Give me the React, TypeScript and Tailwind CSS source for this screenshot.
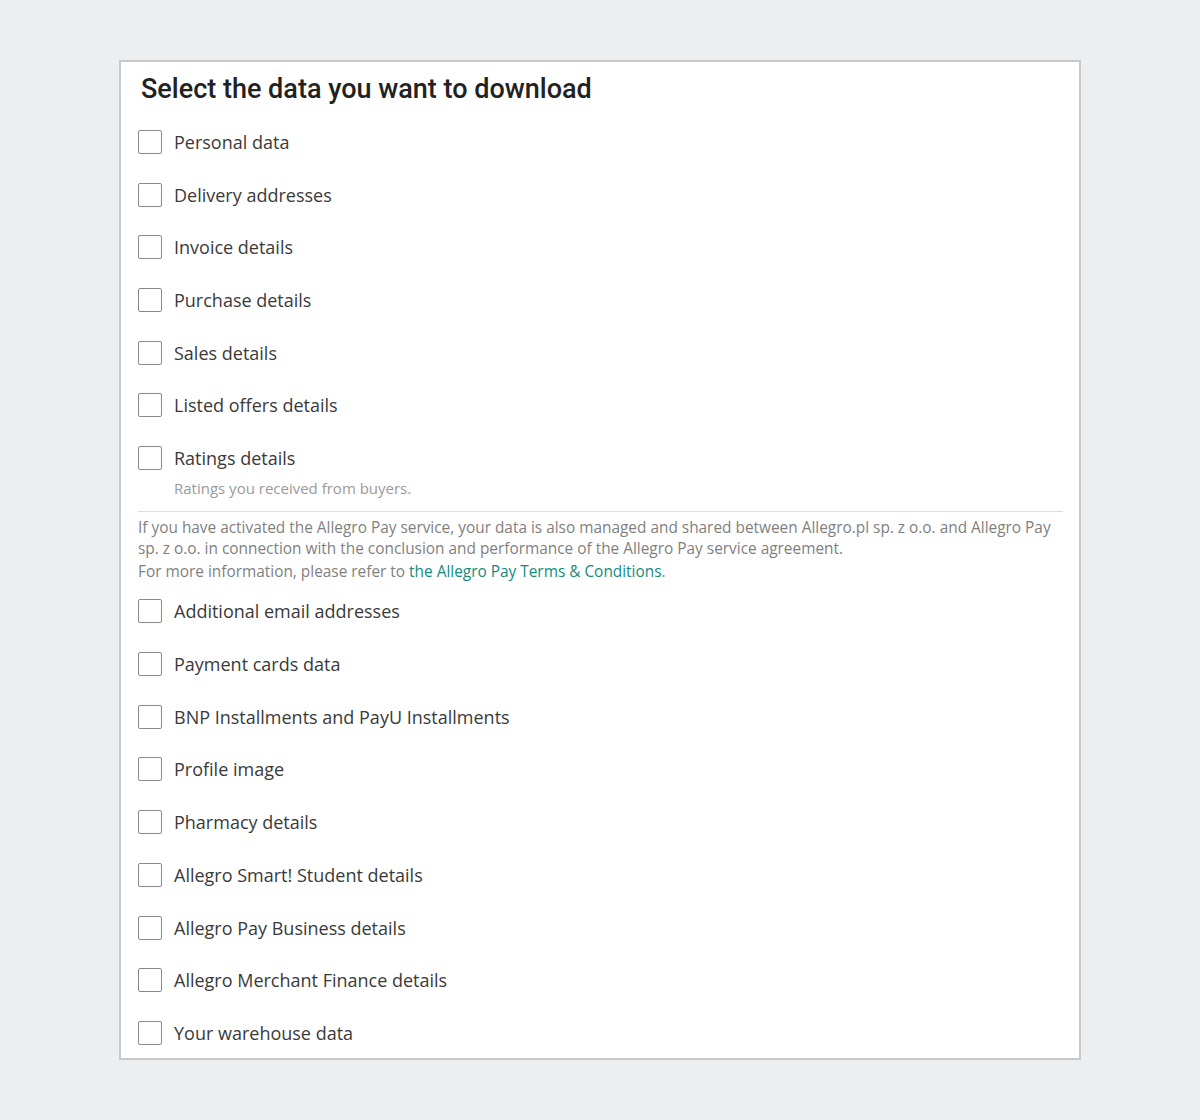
const firstGroup = [
  "Personal data",
  "Delivery addresses",
  "Invoice details",
  "Purchase details",
  "Sales details",
  "Listed offers details",
];

const secondGroup = [
  "Additional email addresses",
  "Payment cards data",
  "BNP Installments and PayU Installments",
  "Profile image",
  "Pharmacy details",
  "Allegro Smart! Student details",
  "Allegro Pay Business details",
  "Allegro Merchant Finance details",
  "Your warehouse data",
];

function Box() {
  return (
    <span className="w-6 h-6 shrink-0 rounded-[2px] border-[1.5px] border-[#8a8a8a] bg-white" />
  );
}

function Item({ label, className = "" }: { label: string; className?: string }) {
  return (
    <label className={`flex items-center h-6 gap-3 cursor-pointer ${className}`}>
      <input type="checkbox" className="sr-only" />
      <Box />
      <span className="text-[18px] leading-6 text-[#3a3a3a]">{label}</span>
    </label>
  );
}

export default function App() {
  return (
    <div
      className="min-h-[1120px] bg-[#eceff1] pt-[60px] px-[119px]"
      style={{ fontFamily: '"Open Sans", "Liberation Sans", sans-serif' }}
    >
      <div className="w-[962px] h-[1000px] bg-white border-2 border-[#c9c9c9] pl-[17px] pr-[16px]">
        <h1
          className="mt-3 ml-[3px] text-[27px] leading-[30px] font-medium text-[#222]"
          style={{ fontFamily: 'Roboto, "Liberation Sans", sans-serif' }}
        >
          Select the data you want to download
        </h1>

        <div className="mt-[26px] flex flex-col gap-[28.7px]">
          {firstGroup.map((l) => (
            <Item key={l} label={l} />
          ))}
          <div>
            <Item label="Ratings details" />
            <p className="mt-[8px] ml-[36px] text-[15px] leading-5 text-[#9a9a9a]">
              Ratings you received from buyers.
            </p>
          </div>
        </div>

        <div className="mt-[13px] border-t border-[#dcdcdc] pt-[5px] text-[15.4px] leading-[21px] text-[#7f7f7f]">
          <p>
            If you have activated the Allegro Pay service, your data is also managed and shared between
            Allegro.pl sp. z o.o. and Allegro Pay
            <br />
            sp. z o.o. in connection with the conclusion and performance of the Allegro Pay service
            agreement.
          </p>
          <p className="mt-[2px]">
            For more information, please refer to{" "}
            <a href="#" className="text-[#128c7e]">
              the Allegro Pay Terms &amp; Conditions
            </a>
            .
          </p>
        </div>

        <div className="mt-[17px] flex flex-col gap-[28.75px]">
          {secondGroup.map((l) => (
            <Item key={l} label={l} />
          ))}
        </div>
      </div>
    </div>
  );
}
